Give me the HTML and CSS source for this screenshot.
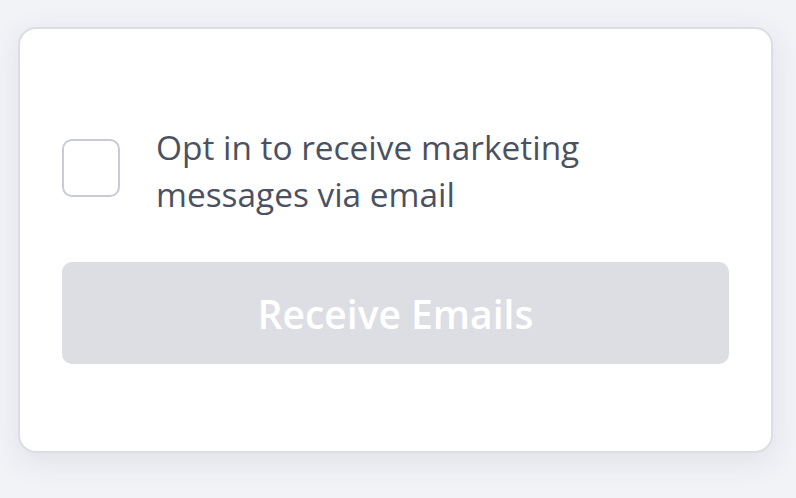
FILE: index.html
```html
<!DOCTYPE html>
<html lang="en">
<head>
    <meta charset="UTF-8">
    <title>Email Opt-in</title>
    <meta name="viewport" content="width=device-width, initial-scale=1.0">
    <link rel="stylesheet" href="styles.css">
</head>
<body>
<div class="card">
    <label class="opt-row">
        <span class="checkbox"></span>
        <span class="opt-text">Opt in to receive marketing messages via email</span>
    </label>
    <button class="submit-btn" disabled>Receive Emails</button>
</div>
</body>
</html>
```

FILE: styles.css
```css
* {
    box-sizing: border-box;
}

body {
    margin: 0;
    padding: 27px 23px 0 18px;
    background-color: #f2f3f7;
    font-family: "Open Sans", sans-serif;
    height: 100vh;
}

.card {
    width: 755px;
    height: 426px;
    background-color: #ffffff;
    border: 2px solid #dcdee4;
    border-radius: 18px;
    padding: 95px 42px 0 42px;
    box-shadow: 0 8px 30px rgba(60, 70, 100, 0.10);
}

.opt-row {
    display: flex;
    align-items: flex-start;
    gap: 36px;
}

.checkbox {
    flex-shrink: 0;
    width: 58px;
    height: 58px;
    margin-top: 15px;
    border: 2px solid #c9ccd6;
    border-radius: 10px;
}

.opt-text {
    width: 450px;
    font-size: 33.4px;
    line-height: 47px;
    color: #4b5161;
}

.submit-btn {
    display: block;
    width: 100%;
    height: 102px;
    margin-top: 44px;
    border: none;
    border-radius: 10px;
    background-color: #dcdee4;
    color: #ffffff;
    font-family: "Open Sans", sans-serif;
    font-weight: 600;
    font-size: 39px;
}
```
